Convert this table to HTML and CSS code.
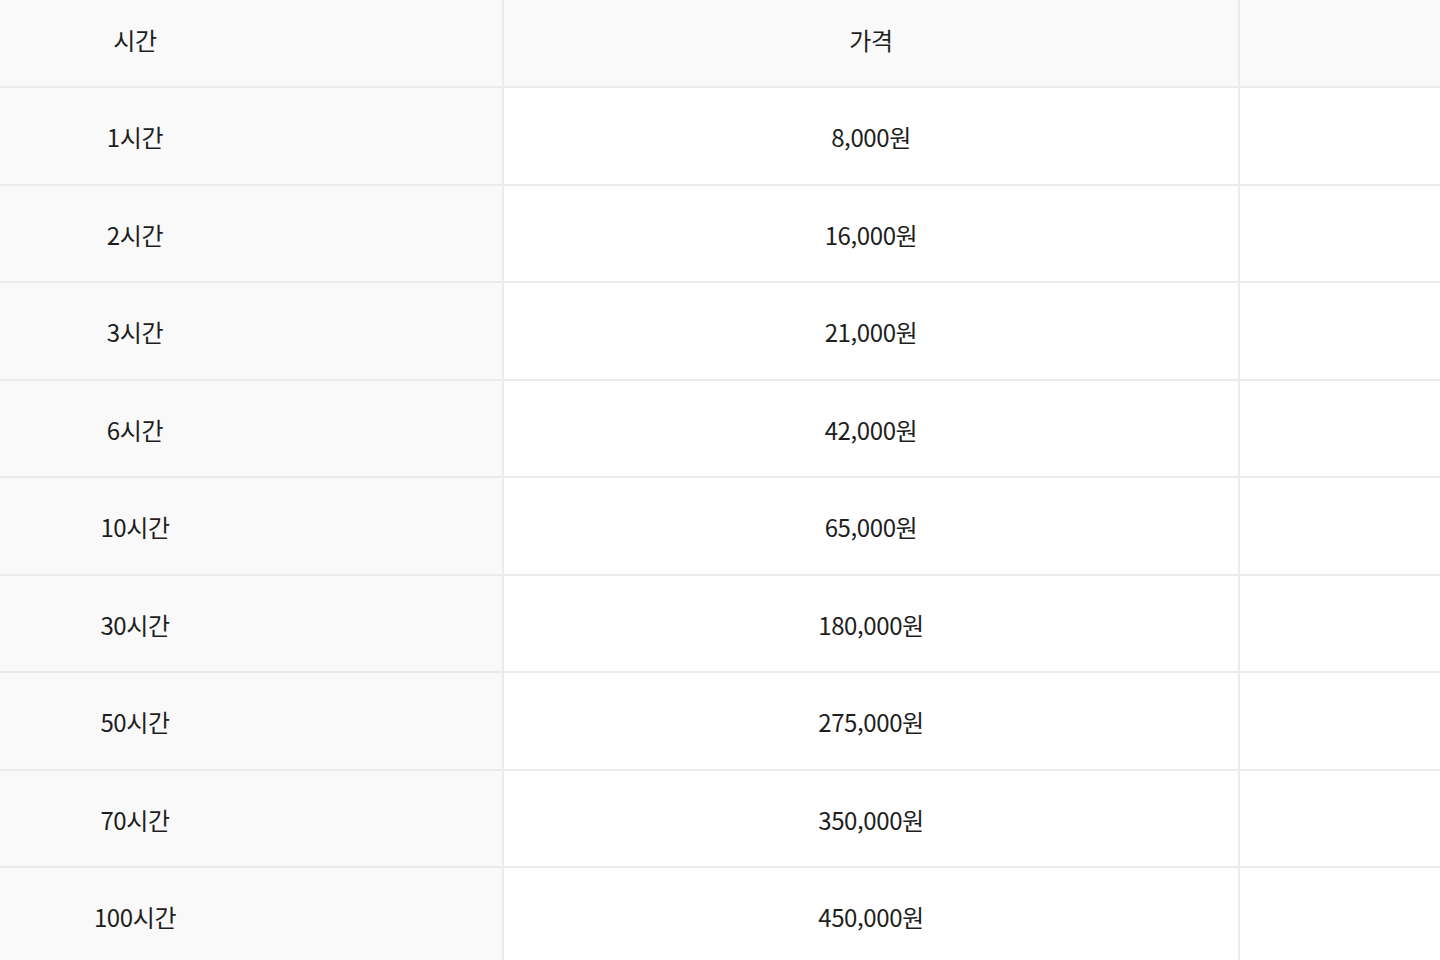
FILE: index.html
```html
<!DOCTYPE html>
<html lang="ko">
<head>
<meta charset="utf-8">
<title>가격표</title>
<link rel="stylesheet" href="styles.css">
</head>
<body>
<div class="price-table">
  <div class="cell head first">시간</div>
  <div class="cell head">가격</div>
  <div class="cell head"></div>

  <div class="cell first">1시간</div>
  <div class="cell">8,000원</div>
  <div class="cell"></div>

  <div class="cell first">2시간</div>
  <div class="cell">16,000원</div>
  <div class="cell"></div>

  <div class="cell first">3시간</div>
  <div class="cell">21,000원</div>
  <div class="cell"></div>

  <div class="cell first">6시간</div>
  <div class="cell">42,000원</div>
  <div class="cell"></div>

  <div class="cell first">10시간</div>
  <div class="cell">65,000원</div>
  <div class="cell"></div>

  <div class="cell first">30시간</div>
  <div class="cell">180,000원</div>
  <div class="cell"></div>

  <div class="cell first">50시간</div>
  <div class="cell">275,000원</div>
  <div class="cell"></div>

  <div class="cell first">70시간</div>
  <div class="cell">350,000원</div>
  <div class="cell"></div>

  <div class="cell first">100시간</div>
  <div class="cell">450,000원</div>
  <div class="cell"></div>
</div>
</body>
</html>
```
FILE: styles.css
```css
html, body {
  margin: 0;
  padding: 0;
  background: #ffffff;
  overflow: hidden;
}

body {
  width: 1440px;
  height: 960px;
  font-family: "Noto Sans CJK KR", "Noto Sans", sans-serif;
  color: #1e1e1e;
}

.price-table {
  display: grid;
  grid-template-columns: repeat(3, 736px);
  grid-auto-rows: 97.5px;
  margin: -9.5px 0 0 -232px;
  width: 2208px;
}

.cell {
  box-sizing: border-box;
  display: flex;
  align-items: center;
  justify-content: center;
  border-right: 2px solid #ebebeb;
  border-bottom: 2px solid #ebebeb;
  font-size: 24px;
  letter-spacing: -0.4px;
  background: #ffffff;
  padding-top: 2px;
}

.cell.head,
.cell.first {
  background: #f9f9f9;
}
```
